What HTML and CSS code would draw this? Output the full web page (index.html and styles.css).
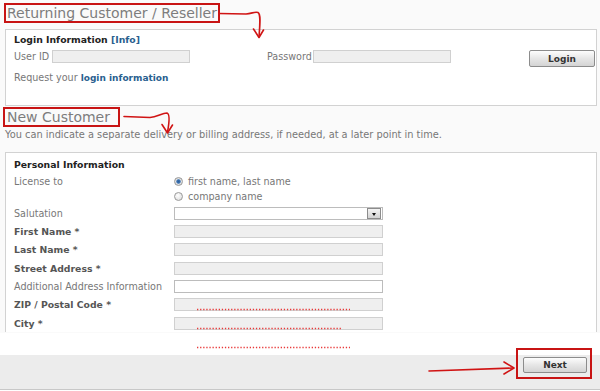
FILE: index.html
```html
<!DOCTYPE html>
<html lang="en">
<head>
    <meta charset="UTF-8">
    <title>Checkout - Customer</title>
    <link rel="stylesheet" href="styles.css">
</head>
<body>
<div class="page">

    <section class="section returning">
        <h2 class="section-title"><span class="callout">Returning Customer / Reseller</span></h2>
        <div class="panel login-panel">
            <h3 class="panel-title">Login Information <a href="#" class="info-link">[Info]</a></h3>
            <div class="login-row">
                <label class="field-label user-label" for="userId">User ID</label>
                <input class="text-input" type="text" id="userId">
                <label class="field-label pass-label" for="password">Password</label>
                <input class="text-input" type="password" id="password">
                <button class="btn login-btn">Login</button>
            </div>
            <p class="request">Request your <a href="#">login information</a></p>
        </div>
    </section>

    <section class="section new-customer">
        <h2 class="section-title"><span class="callout callout-new">New Customer</span></h2>
        <p class="note">You can indicate a separate delivery or billing address, if needed, at a later point in time.</p>
        <div class="panel personal-panel">
            <h3 class="panel-title">Personal Information</h3>
            <div class="license">
                <span class="row-label">License to</span>
                <div class="radios">
                    <label class="radio-option"><input type="radio" name="license" checked> first name, last name</label>
                    <label class="radio-option"><input type="radio" name="license"> company name</label>
                </div>
            </div>
            <div class="form-row">
                <span class="row-label">Salutation</span>
                <div class="select"><span class="select-arrow"></span></div>
            </div>
            <div class="form-row">
                <span class="row-label required">First Name *</span>
                <input class="text-input wide" type="text">
            </div>
            <div class="form-row">
                <span class="row-label required">Last Name *</span>
                <input class="text-input wide" type="text">
            </div>
            <div class="form-row">
                <span class="row-label required">Street Address *</span>
                <input class="text-input wide" type="text">
            </div>
            <div class="form-row">
                <span class="row-label">Additional Address Information</span>
                <input class="text-input wide optional" type="text">
            </div>
            <div class="form-row">
                <span class="row-label required">ZIP / Postal Code *</span>
                <input class="text-input wide" type="text">
            </div>
            <div class="form-row">
                <span class="row-label required">City *</span>
                <input class="text-input wide" type="text">
            </div>
        </div>
    </section>

    <div class="gap"></div>

    <div class="footer">
        <button class="btn next-btn">Next</button>
    </div>

    <!-- hand drawn annotations on top of the screenshot -->
    <svg class="annotations" width="600" height="391" viewBox="0 0 600 391">
        <g class="arrow">
            <path d="M219 13.5 L246 14 C252 13.5 255 11.5 258 12.5 C261 14 260 24 259 37"/>
            <path d="M253.5 29 L259 37.5 L263.5 30"/>
            <path d="M124 116.5 L150 117.5 C157 117 162 113 167 113 C170 114 169 124 167.5 132"/>
            <path d="M162 124.5 L167.5 133 L172.5 125"/>
            <path d="M429 371 L513 368"/>
            <path d="M504 362 L514 368 L504 374"/>
        </g>
        <g class="dots">
            <line x1="197" y1="309.5" x2="350" y2="309.5"/>
            <line x1="197" y1="328.5" x2="342" y2="328.5"/>
            <line x1="197" y1="347.5" x2="350" y2="347.5"/>
        </g>
    </svg>
    <div class="next-callout"></div>

</div>
</body>
</html>
```

FILE: styles.css
```css
body {
    margin: 0;
    background-color: #fff;
    font-family: "DejaVu Sans", Verdana, sans-serif;
    font-size: 9.6px;
    color: #777;
}
.page {
    position: relative;
    width: 600px;
    height: 391px;
    overflow: hidden;
}
.section {
    background-color: #fafafa;
}
.returning {
    padding-top: 3px;
    height: 103px;
}
.section-title {
    margin: 0;
    font-size: 14px;
    font-weight: normal;
    color: #7d7d7d;
    line-height: 16px;
}
.callout {
    display: inline-block;
    border: 2px solid #c81414;
    padding: 0 1px;
    margin-left: 4px;
}
.callout-new {
    margin-left: 3px;
    margin-top: 1px;
    padding: 0 8px 0 2px;
}
.panel {
    box-sizing: border-box;
    margin: 0 3px 0 5px;
    border: 1px solid #d2d2d2;
    background-color: #fff;
    padding: 4px 0 0 8px;
}
.login-panel {
    margin-top: 6px;
    height: 77px;
}
.panel-title {
    margin: 0;
    font-size: 9.3px;
    line-height: 12px;
    color: #222;
}
.info-link {
    color: #2a5f8f;
    text-decoration: none;
}
.login-row {
    display: flex;
    align-items: flex-start;
    margin-top: 4px;
    height: 17px;
}
.login-row > * {
    flex-shrink: 0;
}
.field-label {
    line-height: 13px;
}
.user-label {
    width: 38px;
}
.pass-label {
    width: 46px;
    margin-left: 77px;
}
.text-input {
    box-sizing: border-box;
    width: 138px;
    height: 13px;
    margin: 0;
    padding: 0;
    border: 1px solid #d0d0d0;
    background-color: #efefef;
}
.btn {
    box-sizing: border-box;
    height: 17px;
    padding: 0;
    border: 1px solid #8c8c8c;
    border-radius: 2px;
    background: linear-gradient(#fdfdfd, #e6e6e6 50%, #d4d4d4);
    font-family: "DejaVu Sans", Verdana, sans-serif;
    font-size: 9px;
    font-weight: bold;
    color: #333;
    cursor: pointer;
}
.login-btn {
    width: 66px;
    margin-left: 78px;
}
.request {
    margin: 5px 0 0;
    line-height: 12px;
}
.request a {
    color: #2a5f8f;
    font-weight: bold;
    font-size: 9px;
    text-decoration: none;
}
.new-customer {
    height: 227px;
}
.note {
    margin: 2px 0 0 5px;
    line-height: 12px;
    font-size: 9.8px;
}
.personal-panel {
    margin-top: 11px;
    height: 180px;
    border-bottom: none;
    padding-top: 6px;
}
.license {
    display: flex;
    margin-top: 3px;
}
.row-label {
    width: 160px;
    flex-shrink: 0;
}
.license .row-label {
    line-height: 15px;
}
.radios {
    display: flex;
    flex-direction: column;
}
.radio-option {
    display: flex;
    align-items: center;
    height: 15px;
}
.radio-option input {
    appearance: none;
    width: 9px;
    height: 9px;
    margin: 0 5px 0 0;
    border: 1px solid #9a9a9a;
    border-radius: 50%;
    background: radial-gradient(circle at 40% 35%, #fff, #d8d8d8);
    box-sizing: border-box;
}
.radio-option input:checked {
    background: radial-gradient(circle, #2d5f9a 0, #3d74b3 1.8px, #e6e6e6 2.6px, #c8c8c8);
}
.form-row {
    display: flex;
    align-items: center;
    height: 18.35px;
}
.form-row:first-of-type {
    margin-top: -1.5px;
}
.required {
    font-weight: bold;
    font-size: 9.3px;
    color: #555;
}
.wide {
    width: 209px;
}
.optional {
    background-color: #fff;
    border-color: #bcbcbc;
}
.select {
    box-sizing: border-box;
    display: flex;
    justify-content: flex-end;
    align-items: center;
    width: 209px;
    height: 13px;
    padding-right: 1px;
    border: 1px solid #bcbcbc;
    background-color: #fff;
}
.select-arrow {
    box-sizing: border-box;
    position: relative;
    width: 14px;
    height: 11px;
    border: 1px solid #8c8c8c;
    background: linear-gradient(#f4f4f4, #d2d2d2);
}
.select-arrow::after {
    content: "";
    position: absolute;
    left: 4px;
    top: 4px;
    border-left: 2.5px solid transparent;
    border-right: 2.5px solid transparent;
    border-top: 3px solid #111;
}
.gap {
    height: 22px;
    background-color: #fff;
}
.footer {
    box-sizing: border-box;
    display: flex;
    justify-content: flex-end;
    height: 35px;
    padding: 2px 13px 0 0;
    background-color: #ececec;
    border-bottom: 1px solid #c8c8c8;
}
.next-btn {
    width: 64px;
    height: 16px;
}
.annotations {
    position: absolute;
    left: 0;
    top: 0;
    pointer-events: none;
}
.arrow path {
    fill: none;
    stroke: #d01414;
    stroke-width: 1.6;
    stroke-linecap: round;
    stroke-linejoin: round;
}
.dots line {
    stroke: #e83a3a;
    stroke-width: 1.4;
    stroke-dasharray: 1.3 1.8;
}
.next-callout {
    position: absolute;
    left: 516px;
    top: 348px;
    width: 72px;
    height: 27px;
    border: 2px solid #c81414;
}
```
